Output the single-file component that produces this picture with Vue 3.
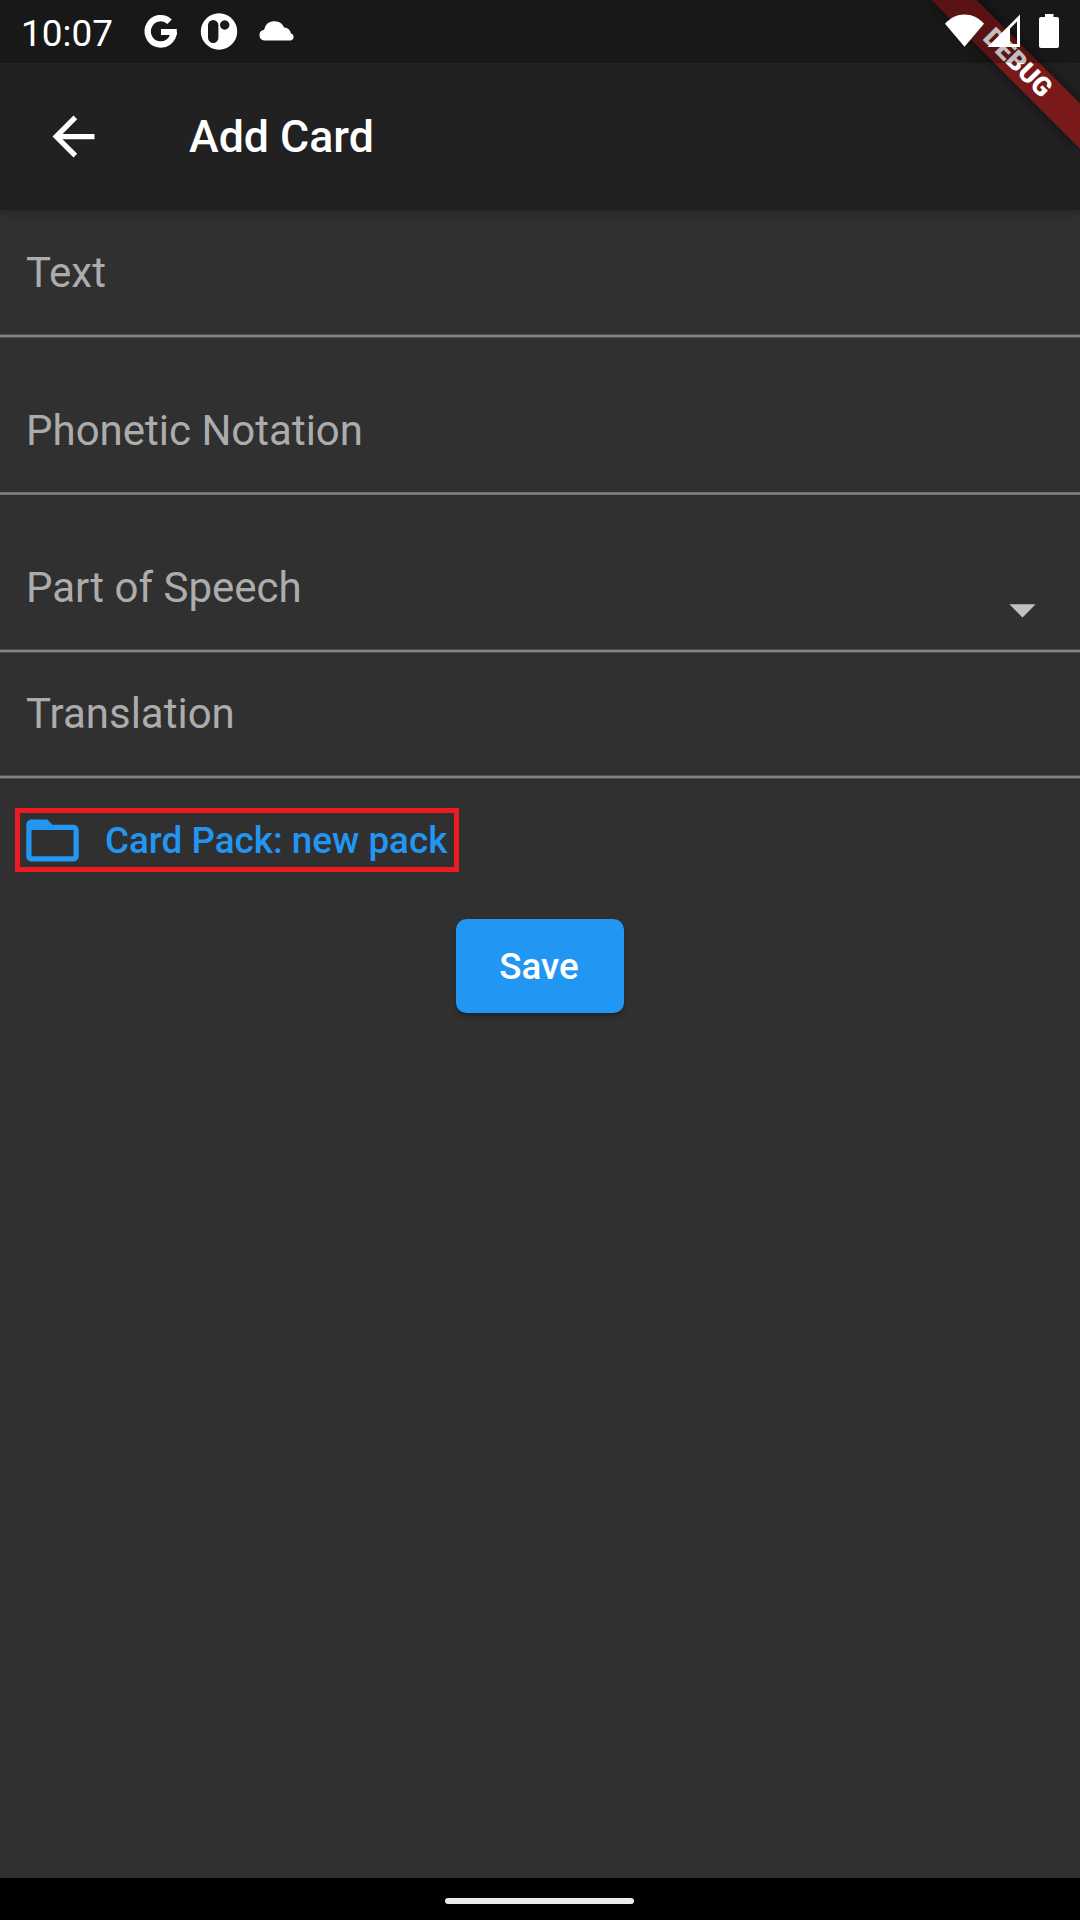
<script setup>
const fields = [
  { label: 'Text', cls: 'first' },
  { label: 'Phonetic Notation', cls: 'spaced even' },
  { label: 'Part of Speech', cls: 'spaced third', dropdown: true },
  { label: 'Translation', cls: 'last' }
]
</script>

<template>
  <div class="screen">
    <header class="appbar">
      <svg class="back" viewBox="0 0 24 24"><path d="M20 11H7.83l5.59-5.59L12 4l-8 8 8 8 1.41-1.41L7.83 13H20v-2z" /></svg>
      <h1>Add Card</h1>
    </header>

    <main>
      <div v-for="f in fields" :key="f.label" class="field" :class="f.cls">
        <span class="label">{{ f.label }}</span>
        <svg v-if="f.dropdown" class="drop" viewBox="0 0 24 24"><path d="M7 10l5 5 5-5z" /></svg>
        <i class="rule"></i>
      </div>
      <div class="pack">
        <svg viewBox="0 0 24 24"><path d="M20 6h-8l-2-2H4c-1.1 0-1.99.9-1.99 2L2 18c0 1.1.9 2 2 2h16c1.1 0 2-.9 2-2V8c0-1.1-.9-2-2-2zm0 12H4V8h16v10z" /></svg>
        <span>Card Pack: new pack</span>
      </div>
      <button class="save">Save</button>
    </main>

    <footer class="nav"><i></i></footer>

    <div class="banner-clip"><div class="banner">DEBUG</div></div>

    <div class="status">
      <span class="time">10:07</span>
      <svg class="notif" viewBox="140 10 160 44">
        <path d="M169.600 21.700A13 13.200 0 1 0 173.700 31.900" fill="none" stroke="#fff" stroke-width="6.400" />
        <path d="M161 29h15.800v6H161z" />
        <path fill-rule="evenodd" d="M219 13.300a18.200 18.200 0 1 0 .01 0zM208 25.200a5.200 5.200 0 0 1 10.400 0v12.600a5.200 5.200 0 0 1-10.400 0zM224.700 20.300a4.700 4.700 0 1 1-.01 0z" />
        <path d="M264.400 40.600a5.500 5.500 0 0 1-.3-10.900 10.600 10.600 0 0 1 20-2.300 7.400 7.400 0 0 1 6.800 6 3.700 3.700 0 0 1-.3 7.200z" />
      </svg>
      <svg class="system" viewBox="940 10 124 44">
        <path d="M945 23.700C956 11.500 973 11.500 984 23.700L964.500 46.700z" />
        <path fill-rule="evenodd" d="M987.500 47L1020 14.500V47zM1010 28.500V44h7V21.500z" />
        <path d="M1045 14h8.500v3h3.500q2 0 2 2v27q0 2-2 2h-16q-2 0-2-2v-27q0-2 2-2h4z" />
      </svg>
    </div>
  </div>
</template>

<style>
body { margin: 0; background: #303030; }
</style>

<style scoped>
.screen {
  position: relative;
  display: flex;
  flex-direction: column;
  width: 1080px;
  height: 1920px;
  overflow: hidden;
  background: #303030;
  font-family: Roboto, "Liberation Sans", sans-serif;
}
.appbar {
  box-sizing: border-box;
  height: 210px;
  flex: none;
  padding: 63px 0 0 42px;
  display: flex;
  align-items: center;
  background: #212121;
  color: #fff;
  box-shadow: 0 3px 8px rgba(0, 0, 0, 0.22);
}
.back { width: 63px; height: 63px; fill: #fff; }
h1 { margin: 1px 0 0 84px; font-size: 44.7px; font-weight: 500; line-height: 60px; }
main { flex: 1; display: flex; flex-direction: column; align-items: flex-start; }
.field {
  box-sizing: border-box;
  width: 100%;
  height: 126px;
  flex: none;
  display: flex;
  flex-wrap: wrap;
  justify-content: space-between;
  padding: 36px 26px 0 26px;
  overflow: hidden;
  align-content: space-between;
}
.first { height: 128px; padding-top: 38px; }
.spaced { height: 157px; padding-top: 68px; }
.third { height: 158px; }
.label { font-size: 42px; line-height: 50px; color: #acacac; height: 50px; white-space: nowrap; }
.drop { width: 63px; height: 63px; margin-top: 16px; margin-bottom: -29px; fill: #c1c1c1; transform: translateY(-1px); }
.rule {
  width: 1080px;
  height: 4px;
  margin: 0 -26px;
  flex: none;
  background: linear-gradient(#505050 1px, #838383 1px 3px, #505050 3px);
}
.even .rule { height: 3px; background: linear-gradient(#707070 1px, #838383 1px 2px, #707070 2px); }
.pack {
  box-sizing: border-box;
  width: 444px;
  height: 64px;
  margin: 29px 0 0 15px;
  padding-left: 1px;
  border: 5px solid #ed1c24;
  display: flex;
  align-items: center;
  gap: 21px;
  color: #2196f3;
  font-size: 36.8px;
  font-weight: 500;
  white-space: nowrap;
}
.pack svg { width: 63px; height: 63px; flex: none; fill: currentColor; }
.save {
  width: 168px;
  height: 94px;
  margin: 47px 0 0 456px;
  padding: 0 2px 0 0;
  border: 0;
  border-radius: 10.5px;
  background: #2196f3;
  color: #fff;
  font: 500 36.75px Roboto, "Liberation Sans", sans-serif;
  box-shadow: 0 3px 5px rgba(0, 0, 0, 0.3);
}
.nav { height: 42px; flex: none; background: #000; display: flex; justify-content: center; align-items: center; }
.nav i { width: 189px; height: 6px; border-radius: 3px; background: #ebebeb; margin: 4px 1px 0 0; }
.banner-clip { position: absolute; top: 0; right: 0; width: 220px; height: 220px; overflow: hidden; }
.banner {
  position: absolute;
  left: 51.9px;
  top: 47.1px;
  width: 210px;
  height: 31.5px;
  transform: rotate(45deg);
  background: #791919;
  box-shadow: 0 0 16px rgba(0, 0, 0, 0.5);
  color: #fff;
  font-size: 26.4px;
  font-weight: 900;
  line-height: 31.5px;
  text-align: center;
  text-indent: 1px;
}
.status {
  position: absolute;
  top: 0;
  left: 0;
  box-sizing: border-box;
  width: 1080px;
  height: 63px;
  padding: 10px 16px 0 21px;
  display: flex;
  background: rgba(0, 0, 0, 0.25);
}
.status svg { height: 44px; fill: #fff; flex: none; }
.time { width: 119px; font-size: 36.9px; line-height: 48px; color: #fff; }
.notif { width: 160px; }
.system { width: 124px; margin-left: auto; }
</style>
